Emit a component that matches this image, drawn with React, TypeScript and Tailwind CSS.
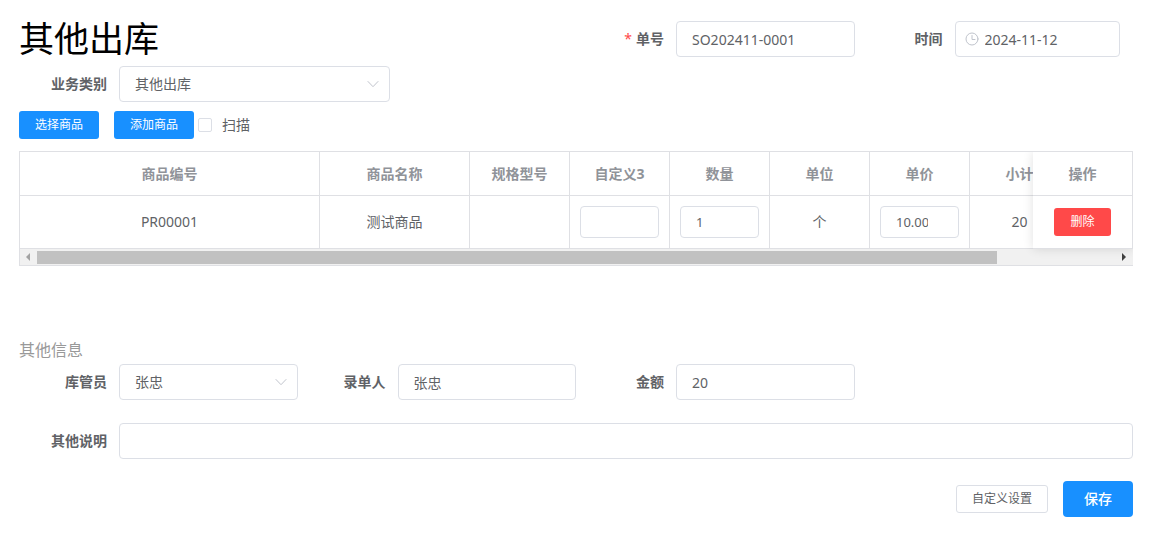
import React, { useRef, useState } from 'react'

interface FieldProps {
    id: string
    label: string
    required?: boolean
    className?: string
    children: React.ReactNode
}

const inputClass =
    'h-9 w-full min-w-0 rounded border border-[#dcdfe6] bg-white px-[15px] text-sm text-[#606266] outline-none focus:border-[#1890ff]'

const cellInputClass =
    'block h-8 w-full min-w-0 rounded border border-[#dcdfe6] bg-white pl-[15px] pr-[30px] text-[13px] text-[#606266] outline-none focus:border-[#1890ff]'

const Field: React.FC<FieldProps> = ({ id, label, required, className = 'w-1/4', children }) => (
    <div className={`flex items-center ${className}`}>
        <label htmlFor={id} className="w-[100px] shrink-0 pr-3 text-right text-sm font-bold text-[#606266]">
            {required && <span className="mr-1 font-normal text-[#ff4949]">*</span>}
            {label}
        </label>
        {children}
    </div>
)

const SelectBox: React.FC<{ id: string; options: string[] }> = ({ id, options }) => (
    <div className="relative min-w-0 flex-1">
        <select id={id} className={`${inputClass} appearance-none`}>
            {options.map((option) => (
                <option key={option}>{option}</option>
            ))}
        </select>
        <svg
            className="pointer-events-none absolute top-3 right-[11px] h-3 w-3"
            viewBox="0 0 12 12"
            fill="none"
            stroke="#c0c4cc"
            strokeLinecap="round"
            strokeLinejoin="round"
        >
            <path d="M1 3.5 6 8.7 11 3.5" />
        </svg>
    </div>
)

const ClockIcon = () => (
    <svg
        className="pointer-events-none absolute top-[11px] left-[10px] h-3.5 w-3.5"
        viewBox="0 0 14 14"
        fill="none"
        stroke="#c0c4cc"
        strokeLinecap="round"
    >
        <circle cx="7" cy="7" r="6" />
        <path d="M7 3.5V7.5H10" />
    </svg>
)

const columns = [
    { title: '商品编号', width: 'w-[300px]' },
    { title: '商品名称', width: 'w-[150px]' },
    { title: '规格型号', width: 'w-[100px]' },
    { title: '自定义3', width: 'w-[100px]' },
    { title: '数量', width: 'w-[100px]' },
    { title: '单位', width: 'w-[100px]' },
    { title: '单价', width: 'w-[100px]' },
    { title: '小计', width: 'w-[100px]' },
    { title: '', width: 'w-[100px]' },
]

const thClass = 'h-11 border-r border-b border-[#dfe0e4] bg-white text-center font-bold text-[#909399]'
const tdClass = 'h-[53px] border-r border-b border-[#dfe0e4] bg-white px-[10px] text-center'

const GoodsTable = () => {
    const bodyRef = useRef<HTMLDivElement>(null)
    const [offset, setOffset] = useState(0)

    const handleScroll = () => {
        const el = bodyRef.current
        if (el) setOffset((el.scrollLeft / el.scrollWidth) * 100)
    }

    const scrollBy = (left: number) => bodyRef.current?.scrollBy({ left })

    return (
        <div className="relative overflow-hidden border-t border-l border-[#dfe0e4]">
            <div ref={bodyRef} onScroll={handleScroll} className="overflow-x-auto [scrollbar-width:none]">
                <table className="w-[1250px] table-fixed border-separate border-spacing-0 text-sm text-[#606266]">
                    <thead>
                        <tr>
                            {columns.map((col) => (
                                <th key={col.title} className={`${thClass} ${col.width}`}>
                                    {col.title}
                                </th>
                            ))}
                            <th className={`${thClass} sticky right-0 w-[100px]`}>操作</th>
                        </tr>
                    </thead>
                    <tbody>
                        <tr>
                            <td className={tdClass}>PR00001</td>
                            <td className={tdClass}>测试商品</td>
                            <td className={tdClass}></td>
                            <td className={tdClass}>
                                <input aria-label="自定义3" className={cellInputClass} />
                            </td>
                            <td className={tdClass}>
                                <input aria-label="数量" defaultValue="1" className={cellInputClass} />
                            </td>
                            <td className={tdClass}>个</td>
                            <td className={tdClass}>
                                <input aria-label="单价" defaultValue="10.00" className={cellInputClass} />
                            </td>
                            <td className={tdClass}>20</td>
                            <td className={tdClass}></td>
                            <td className={`${tdClass} sticky right-0`}>
                                <button type="button" className="h-7 rounded-[3px] bg-[#ff4949] px-4 text-xs text-white">
                                    删除
                                </button>
                            </td>
                        </tr>
                    </tbody>
                </table>
            </div>

            {/* Shadow of the fixed column */}
            <div className="pointer-events-none absolute top-0 right-0 h-[97px] w-[100px] shadow-[0_0_10px_rgba(0,0,0,0.12)]" />

            {/* Horizontal scrollbar */}
            <div className="flex h-[17px] items-center border-b border-[#dfe0e4] bg-[#f1f1f1]">
                <button
                    type="button"
                    aria-label="向左滚动"
                    onClick={() => scrollBy(-40)}
                    className="flex h-4 w-[17px] items-center justify-center"
                >
                    <svg className="h-2 w-[5px]" viewBox="0 0 5 8" fill="#a3a3a3">
                        <path d="M4 0v8L0 4z" />
                    </svg>
                </button>
                <div className="h-[13px] flex-1">
                    <div className="h-full w-[89%] bg-[#c1c1c1]" style={{ marginLeft: `${offset}%` }} />
                </div>
                <button
                    type="button"
                    aria-label="向右滚动"
                    onClick={() => scrollBy(40)}
                    className="flex h-4 w-[17px] items-center justify-center"
                >
                    <svg className="h-2 w-[5px]" viewBox="0 0 5 8" fill="#404040">
                        <path d="M0 0v8l4-4z" />
                    </svg>
                </button>
            </div>
        </div>
    )
}

const App: React.FC = () => {
    return (
        <form
            onSubmit={(e) => e.preventDefault()}
            className="bg-white pt-[21px] pr-5 pb-[22px] pl-[19px] font-['Noto_Sans','Noto_Sans_CJK_SC',sans-serif] text-sm text-[#606266]"
        >
            <div className="flex h-9 items-center">
                <h1 className="w-1/2 text-[35px] leading-9 text-black">其他出库</h1>
                <Field id="orderNo" label="单号" required>
                    <input id="orderNo" defaultValue="SO202411-0001" className={inputClass} />
                </Field>
                <Field id="orderDate" label="时间">
                    <div className="relative mr-[13px] min-w-0 flex-1">
                        <input id="orderDate" defaultValue="2024-11-12" className={`${inputClass} pl-[29px]`} />
                        <ClockIcon />
                    </div>
                </Field>
            </div>

            <div className="mt-[9px] flex">
                <Field id="bizType" label="业务类别" className="w-1/3">
                    <SelectBox id="bizType" options={['其他出库']} />
                </Field>
            </div>

            <div className="mt-[9px] mb-3 flex items-center">
                <button type="button" className="mr-[15px] h-7 rounded-[3px] bg-[#1890ff] px-4 text-xs text-white">
                    选择商品
                </button>
                <button type="button" className="mr-1 h-7 rounded-[3px] bg-[#1890ff] px-4 text-xs text-white">
                    添加商品
                </button>
                <label className="flex items-center gap-[10px]">
                    <input
                        type="checkbox"
                        className="h-3.5 w-3.5 appearance-none rounded-xs border border-[#dcdfe6] bg-white checked:border-[#1890ff] checked:bg-[#1890ff]"
                    />
                    扫描
                </label>
            </div>

            <GoodsTable />

            <h2 className="mt-[72px] mb-0.5 text-base leading-6 text-[#999999]">其他信息</h2>
            <div className="flex">
                <Field id="keeper" label="库管员">
                    <SelectBox id="keeper" options={['张忠']} />
                </Field>
                <Field id="recorder" label="录单人">
                    <input id="recorder" defaultValue="张忠" className={inputClass} />
                </Field>
                <Field id="amount" label="金额">
                    <input id="amount" defaultValue="20" className={inputClass} />
                </Field>
            </div>
            <div className="mt-[23px] flex">
                <Field id="remark" label="其他说明" className="w-full">
                    <input id="remark" className={inputClass} />
                </Field>
            </div>

            <div className="mt-[22px] flex items-center justify-end gap-[15px]">
                <button
                    type="button"
                    className="h-7 rounded-[3px] border border-[#dcdfe6] bg-white px-[15px] text-xs text-[#606266]"
                >
                    自定义设置
                </button>
                <button type="submit" className="h-9 rounded bg-[#1890ff] px-[21px] text-sm font-medium text-white">
                    保存
                </button>
            </div>
        </form>
    )
}

export default App
